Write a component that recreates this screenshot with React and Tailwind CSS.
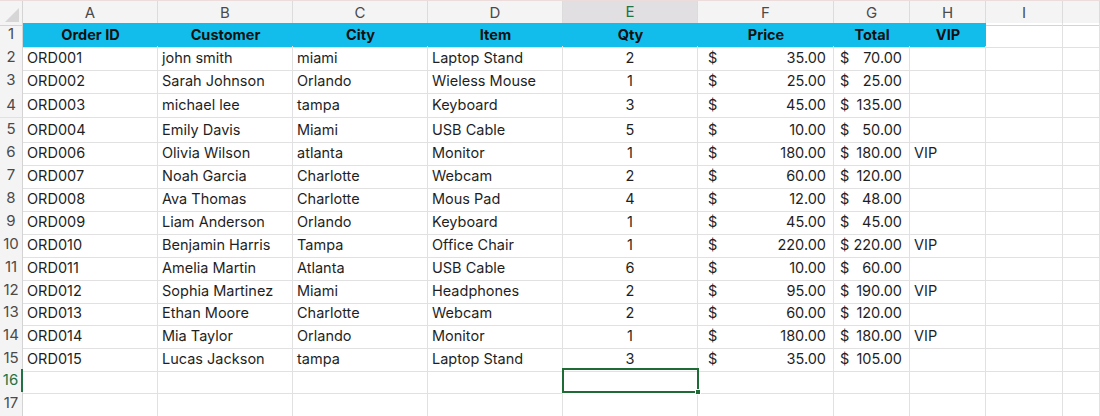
import React from 'react';

const columns = ['A', 'B', 'C', 'D', 'E', 'F', 'G', 'H', 'I', ''];
const gridCols = 'grid grid-cols-[23px_135px_135px_135px_135px_135px_136px_76px_76px_77px_1fr]';

const headers = ['Order ID', 'Customer', 'City', 'Item', 'Qty', 'Price', 'Total', 'VIP'];

const orders = [
    ['ORD001', 'john smith', 'miami', 'Laptop Stand', 2, '35.00', '70.00', ''],
    ['ORD002', 'Sarah Johnson', 'Orlando', 'Wieless Mouse', 1, '25.00', '25.00', ''],
    ['ORD003', 'michael lee', 'tampa', 'Keyboard', 3, '45.00', '135.00', ''],
    ['ORD004', 'Emily Davis', 'Miami', 'USB Cable', 5, '10.00', '50.00', ''],
    ['ORD006', 'Olivia Wilson', 'atlanta', 'Monitor', 1, '180.00', '180.00', 'VIP'],
    ['ORD007', 'Noah Garcia', 'Charlotte', 'Webcam', 2, '60.00', '120.00', ''],
    ['ORD008', 'Ava Thomas', 'Charlotte', 'Mous Pad', 4, '12.00', '48.00', ''],
    ['ORD009', 'Liam Anderson', 'Orlando', 'Keyboard', 1, '45.00', '45.00', ''],
    ['ORD010', 'Benjamin Harris', 'Tampa', 'Office Chair', 1, '220.00', '220.00', 'VIP'],
    ['ORD011', 'Amelia Martin', 'Atlanta', 'USB Cable', 6, '10.00', '60.00', ''],
    ['ORD012', 'Sophia Martinez', 'Miami', 'Headphones', 2, '95.00', '190.00', 'VIP'],
    ['ORD013', 'Ethan Moore', 'Charlotte', 'Webcam', 2, '60.00', '120.00', ''],
    ['ORD014', 'Mia Taylor', 'Orlando', 'Monitor', 1, '180.00', '180.00', 'VIP'],
    ['ORD015', 'Lucas Jackson', 'tampa', 'Laptop Stand', 3, '35.00', '105.00', ''],
];

// row heights in px, keyed by sheet row number (default 23)
const rowHeight = { 4: 'h-[26px]', 12: 'h-[22px]', 15: 'h-[22px]' };

const cell = 'border-r border-b border-[#e1e1e1] flex items-end pb-[1px] overflow-hidden whitespace-nowrap';

function RowNumber({ n, active }) {
    return (
        <div
            className={
                'bg-[#f5f4f5] border-b border-[#e1e1e1] flex items-end justify-center pb-[1px] text-[15px] ' +
                (active ? 'text-[#217346] border-r-2 border-r-[#217346]' : 'text-[#4a4a4a] border-r border-r-[#d4d4d4]')
            }
        >
            {n}
        </div>
    );
}

function DataRow({ n, order }) {
    const [id, customer, city, item, qty, price, total, vip] = order;
    return (
        <div className={gridCols + ' ' + (rowHeight[n] || 'h-[23px]')}>
            <RowNumber n={n} />
            <div className={cell + ' pl-[4px]'}>{id}</div>
            <div className={cell + ' pl-[4px]'}>{customer}</div>
            <div className={cell + ' pl-[4px]'}>{city}</div>
            <div className={cell + ' pl-[4px]'}>{item}</div>
            <div className={cell + ' justify-center'}>{qty}</div>
            <div className={cell + ' justify-between pl-[10px] pr-[7px]'}>
                <span>$</span>
                <span>{price}</span>
            </div>
            <div className={cell + ' justify-between pl-[6px] pr-[7px]'}>
                <span>$</span>
                <span>{total}</span>
            </div>
            <div className={cell + ' pl-[4px]'}>{vip}</div>
            <div className={cell} />
            <div className={cell} />
        </div>
    );
}

function EmptyRow({ n, active }) {
    return (
        <div className={gridCols + ' h-[23px]'}>
            <RowNumber n={n} active={active} />
            {columns.map((c, i) => (
                <div
                    key={i}
                    className={
                        active && c === 'E'
                            ? 'relative border-2 border-[#1e6b35] -ml-px -mt-px h-[25px] w-[137px]'
                            : cell
                    }
                >
                    {active && c === 'E' && (
                        <div className="absolute -right-[4px] -bottom-[4px] w-[6px] h-[6px] bg-[#1e6b35] border border-white" />
                    )}
                </div>
            ))}
        </div>
    );
}

export default function App() {
    return (
        <div
            className="w-[1100px] h-[416px] overflow-hidden bg-white text-[#1f1f1f] text-[14.5px]"
            style={{ fontFamily: 'Inter, "Liberation Sans", sans-serif' }}
        >
            {/* column letters */}
            <div className={gridCols + ' h-[23px] bg-[#f5f4f5] border-t border-[#ecdcdc]'}>
                <div className="border-r border-b border-[#d4d4d4] relative overflow-hidden">
                    <svg className="absolute right-[3px] bottom-[3px]" width="14" height="14" viewBox="0 0 14 14">
                        <polygon points="14,0 14,14 0,14" fill="#d6d6d6" />
                    </svg>
                </div>
                {columns.map((c, i) => (
                    <div
                        key={i}
                        className={
                            'flex items-center justify-center text-[15px] border-r border-[#dcdcdc] ' +
                            (c === 'E'
                                ? 'bg-[#e1dfe1] text-[#217346] border-b-2 border-b-[#217346]'
                                : 'text-[#4a4a4a] border-b border-b-[#d4d4d4]')
                        }
                    >
                        {c}
                    </div>
                ))}
            </div>

            {/* header row */}
            <div className={gridCols + ' h-[23px]'}>
                <RowNumber n={1} />
                {headers.map(h => (
                    <div key={h} className="bg-[#13bdeb] border-b border-[#e1e1e1] flex items-end justify-center pb-[1px] font-bold text-[#111]">
                        {h}
                    </div>
                ))}
                <div className={cell} />
                <div className={cell} />
            </div>

            {orders.map((o, i) => (
                <DataRow key={o[0]} n={i + 2} order={o} />
            ))}

            <EmptyRow n={16} active />
            <EmptyRow n={17} />
        </div>
    );
}
